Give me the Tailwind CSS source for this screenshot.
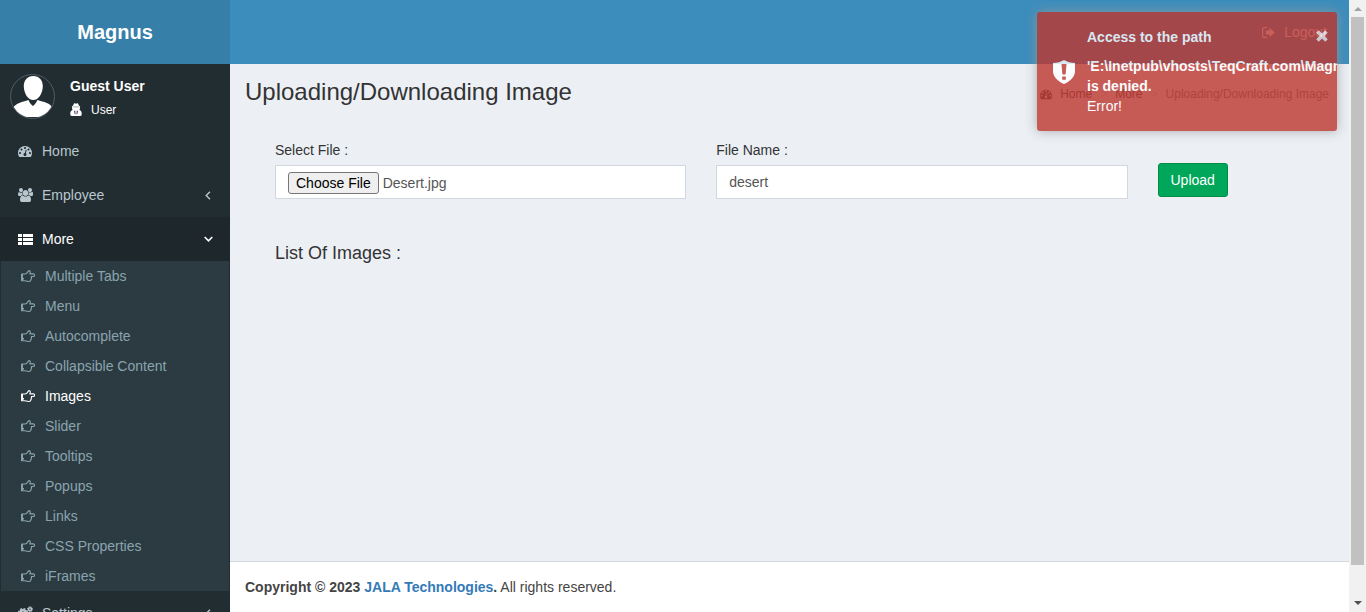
<!DOCTYPE html>
<html lang="en">
<head>
<meta charset="utf-8">
<title>Magnus - Uploading/Downloading Image</title>
<script src="https://cdn.jsdelivr.net/npm/@tailwindcss/browser@4"></script>
</head>
<body class="h-screen overflow-hidden flex font-['Liberation_Sans',Arial,sans-serif] text-sm leading-5 text-[#333]">
<svg class="hidden">
  <symbol id="dash" viewBox="0 0 1792 1792"><path d="M384 1152q0-53-37.5-90.5t-90.5-37.5-90.5 37.5-37.5 90.5 37.5 90.5 90.5 37.5 90.5-37.5 37.5-90.5zm192-448q0-53-37.5-90.5t-90.5-37.5-90.5 37.5-37.5 90.5 37.5 90.5 90.5 37.5 90.5-37.5 37.5-90.5zm428 481l101-382q6-26-7.5-48.5t-38.5-29.5-48 6.5-30 39.5l-101 382q-60 5-107 43.5t-63 98.5q-20 77 20 146t117 89 146-20 89-117q16-60-6-117t-72-91zm660-33q0-53-37.5-90.5t-90.5-37.5-90.5 37.5-37.5 90.5 37.5 90.5 90.5 37.5 90.5-37.5 37.5-90.5zm-640-640q0-53-37.5-90.5t-90.5-37.5-90.5 37.5-37.5 90.5 37.5 90.5 90.5 37.5 90.5-37.5 37.5-90.5zm448 192q0-53-37.5-90.5t-90.5-37.5-90.5 37.5-37.5 90.5 37.5 90.5 90.5 37.5 90.5-37.5 37.5-90.5zm320 448q0 261-141 483-19 29-54 29h-1402q-35 0-54-29-141-221-141-483 0-182 71-348t191-286 286-191 348-71 348 71 286 191 191 286 71 348z"/></symbol>
  <symbol id="users" viewBox="64 0 1920 1792"><path d="M657 896q-162 5-265 128h-134q-82 0-138-40.5t-56-118.5q0-353 124-353 6 0 43.5 21t97.5 42.5 119 21.5q67 0 133-23-5 37-5 66 0 159 93 290zm1071 637q0 120-73 189.5t-194 69.5h-874q-121 0-194-69.5t-73-189.5q0-53 3.5-103.5t14-109 26.5-108.5 43-97.5 62-81 85.5-53.5 111.5-20q10 0 43 21.5t73 48 107 48 135 21.5 135-21.5 107-48 73-48 43-21.5q61 0 111.5 20t85.5 53.5 62 81 43 97.5 26.5 108.5 14 109 3.5 103.5zm-1024-1277q0 106-75 181t-181 75-181-75-75-181 75-181 181-75 181 75 75 181zm704 384q0 159-112.5 271.5t-271.5 112.5-271.5-112.5-112.5-271.5 112.5-271.5 271.5-112.5 271.5 112.5 112.5 271.5zm576 225q0 78-56 118.5t-138 40.5h-134q-103-123-265-128 93-131 93-290 0-29-5-66 66 23 133 23 59 0 119-21.5t97.5-42.5 43.5-21q124 0 124 353zm-128-609q0 106-75 181t-181 75-181-75-75-181 75-181 181-75 181 75 75 181z"/></symbol>
  <symbol id="hand" viewBox="0 0 28 24"><path fill="none" stroke="currentColor" stroke-width="2.200" stroke-linejoin="round" d="M7.500 8H1.200V21.500H7c3 0 4 1.400 7.500 1.400h1.500c2.500 0 3.800-1.400 3.600-3.400 1.200-1 1.300-2.500.8-3.600 1-1 .9-2 .4-3h4.200c1.200 0 2-1.200 2-2.600s-.9-2.500-2-2.500h-7.200c0-1.200.8-1.800.8-3.600 0-2-1.200-3-3-3-1.700 1.400-1.900 3.200-3.400 4.600C11 7 9.500 8 7.500 8z"/><path d="M1 8h3v13H1z"/><path d="M3 16h3v3H3z"/></symbol>
  <symbol id="list" viewBox="0 0 15 11"><path d="M0 0h4v3H0zM5 0h10v3H5zM0 4h4v3H0zM5 4h10v3H5zM0 8h4v3H0zM5 8h10v3H5z"/></symbol>
  <symbol id="left" viewBox="0 0 6 9"><path fill="none" stroke="currentColor" stroke-width="1.4" d="M5 .7 1.200 4.500 5 8.300"/></symbol>
</svg>

<aside class="w-[230px] shrink-0 h-full overflow-hidden bg-[#222d32]">
  <a href="#" class="flex h-16 items-center justify-center bg-[#367fa9] text-xl font-bold text-white">Magnus</a>
  <div class="flex h-[65px] gap-[15px] pt-[10px] pl-[10px] text-white">
    <svg class="size-[45px]" viewBox="0 0 45 45"><defs><clipPath id="c"><circle cx="22.500" cy="22.500" r="21.500"/></clipPath></defs><circle cx="22.500" cy="22.500" r="22" fill="none" stroke="#515b68"/><g clip-path="url(#c)" fill="#fff"><path d="M23.300 2c6 0 9.700 4.300 9.500 10.500-.2 7-4.200 13.500-9.500 13.500s-9.300-6.500-9.500-13.500C13.600 6.300 17.300 2 23.300 2zM3 34c3-5 9-6 15.500-8 1 3 3 5 4.500 6 1.500-1 3-3 4.500-6 6.500 2 13 3 15 8-1 5-4 8.500-7 9H11c-4-1-7-4-8-9z"/></g></svg>
    <div class="pt-[2px]">
      <p class="font-bold leading-5">Guest User</p>
      <a href="#" class="mt-1 flex items-center gap-[9px] text-xs leading-5"><svg class="-mt-[2px] w-3 h-[13px]" viewBox="0 0 24 26" fill="#fff"><path d="M8 1c2-1 3 .5 4 .5S14-.2 16 1c1 1.500 1.400 3 2 4.500l2.500 1.500-1 2 .5 3-1.500 2c3.500 1 5 3.500 5 8 0 2.500-1 4-3 4H3.500c-2 0-3-1.500-3-4 0-4.500 1.500-7 5-8L4 12l.5-3-1-2L6 5.500C6.600 4 7 2.500 8 1z"/><path fill="#222d32" fill-opacity=".6" d="M6.500 7.200h11v1.300h-11z"/><path fill="#4b2a66" d="M8 15.500h2.500l.5 7H9.500zM16 15.500h-2.500l-.5 7h1.500z"/></svg>User</a>
    </div>
  </div>
  <nav class="text-[#b8c7ce]">
    <a href="#" class="flex h-11 items-center pl-[18px]"><svg class="size-[14px] mr-[10px] fill-current"><use href="#dash"/></svg>Home</a>
    <a href="#" class="flex h-11 items-center pl-[18px] pr-[19px]"><svg class="w-[15px] h-[14px] mr-[9px] fill-current"><use href="#users"/></svg>Employee<svg class="ml-auto w-[6px] h-[9px]"><use href="#left"/></svg></a>
    <a href="#" class="flex h-11 items-center bg-[#1e282c] pl-[18px] pr-[17px] text-white"><svg class="w-[15px] h-[11px] mr-[9px] fill-current"><use href="#list"/></svg>More<svg class="ml-auto w-[9px] h-[6px]" viewBox="0 0 9 6"><path fill="none" stroke="currentColor" stroke-width="1.600" d="M.7 1 4.500 4.800 8.300 1"/></svg></a>
    <div class="mx-px bg-[#2c3b41] text-[#8aa4af] *:flex *:h-[30px] *:items-center *:gap-[10px] *:pl-5">
      <a href="#"><svg class="w-[14px] h-3 fill-current"><use href="#hand"/></svg>Multiple Tabs</a>
      <a href="#"><svg class="w-[14px] h-3 fill-current"><use href="#hand"/></svg>Menu</a>
      <a href="#"><svg class="w-[14px] h-3 fill-current"><use href="#hand"/></svg>Autocomplete</a>
      <a href="#"><svg class="w-[14px] h-3 fill-current"><use href="#hand"/></svg>Collapsible Content</a>
      <a href="#" class="text-white"><svg class="w-[14px] h-3 fill-current"><use href="#hand"/></svg>Images</a>
      <a href="#"><svg class="w-[14px] h-3 fill-current"><use href="#hand"/></svg>Slider</a>
      <a href="#"><svg class="w-[14px] h-3 fill-current"><use href="#hand"/></svg>Tooltips</a>
      <a href="#"><svg class="w-[14px] h-3 fill-current"><use href="#hand"/></svg>Popups</a>
      <a href="#"><svg class="w-[14px] h-3 fill-current"><use href="#hand"/></svg>Links</a>
      <a href="#"><svg class="w-[14px] h-3 fill-current"><use href="#hand"/></svg>CSS Properties</a>
      <a href="#"><svg class="w-[14px] h-3 fill-current"><use href="#hand"/></svg>iFrames</a>
    </div>
    <a href="#" class="flex h-11 items-center pl-[18px] pr-[19px]"><svg class="w-[15px] h-[14px] mr-[9px]" viewBox="0 0 30 28" fill="none" stroke="currentColor"><circle cx="10" cy="14" r="5.500" stroke-width="5"/><circle cx="10" cy="14" r="8.800" stroke-width="3" stroke-dasharray="3.900 3"/><circle cx="24" cy="6.500" r="3" stroke-width="3"/><circle cx="24" cy="6.500" r="5" stroke-width="2" stroke-dasharray="2.200 1.700"/><circle cx="24" cy="21.500" r="3" stroke-width="3"/><circle cx="24" cy="21.500" r="5" stroke-width="2" stroke-dasharray="2.200 1.700"/></svg>Settings<svg class="ml-auto w-[6px] h-[9px]"><use href="#left"/></svg></a>
  </nav>
</aside>

<div class="relative flex min-w-0 flex-1 flex-col bg-[#ecf0f5]">
  <header class="flex h-16 shrink-0 items-center justify-end bg-[#3c8dbc] pr-[22px] text-white">
    <a href="#" class="flex items-center gap-[9px]"><svg class="w-[13px] h-[11px] fill-current" viewBox="0 0 26 22"><path fill="none" stroke="currentColor" stroke-width="2.400" d="M10 1.200H5Q1.200 1.200 1.200 5v12q0 3.800 3.800 3.800h5"/><path d="M15 1.500 25.500 11 15 20.500V15H8V7h7z"/></svg>Logout</a>
  </header>
  <main class="flex-1">
    <div class="flex justify-between pt-[15px] pl-[15px] pr-5">
      <h1 class="text-2xl leading-[26px]">Uploading/Downloading Image</h1>
      <nav class="flex h-[30px] items-center text-xs text-[#444]"><svg class="size-3 mr-2 fill-current"><use href="#dash"/></svg><a href="#">Home</a><span class="px-2 text-[#ccc]">&gt;</span><a href="#">More</a><span class="px-2 text-[#ccc]">&gt;</span><span class="text-[#777]">Uploading/Downloading Image</span></nav>
    </div>
    <form class="grid grid-cols-12 px-[30px] pt-[31px]">
      <div class="col-span-5 px-[15px]">
        <label for="file" class="mb-[5px] block">Select File :</label>
        <input id="file" type="file" class="block h-[34px] w-full border border-[#d2d6de] bg-white px-3 py-[6px] text-[#555] file:mr-1 file:h-[22px] file:rounded-[3px] file:border file:border-solid file:border-[#767676] file:bg-[#efefef] file:px-[7px] file:text-black">
      </div>
      <div class="col-span-5 px-[15px]">
        <label for="name" class="mb-[5px] block">File Name :</label>
        <input id="name" type="text" value="desert" class="block h-[34px] w-full border border-[#d2d6de] bg-white px-3 text-[#555]">
      </div>
      <div class="col-span-2 px-[15px] pt-[23px]">
        <button type="button" class="h-[34px] rounded-[3px] border border-[#008d4c] bg-[#00a65a] px-3 text-white">Upload</button>
      </div>
    </form>
    <h2 class="px-[45px] pt-[44px] text-lg leading-5">List Of Images :</h2>
  </main>
  <footer class="border-t border-[#d2d6de] bg-white p-[15px] text-[#444]"><strong>Copyright © 2023 <a href="#" class="text-[#337ab7]">JALA Technologies</a>.</strong> All rights reserved.</footer>

  <div role="alert" class="absolute top-3 right-3 w-[300px] overflow-hidden rounded-[3px] bg-[#bd362f] p-[15px] pl-[50px] text-white opacity-80 shadow-[0_0_12px_#999]">
    <svg class="absolute left-4 top-12 w-[22px] h-6" viewBox="0 0 22 24"><path fill="#fff" d="M11 0c3 2 7 2.800 11 3v8c0 6-5 10.500-11 13C5 21.500 0 17 0 11V3c4-.2 8-1 11-3z"/><path fill="#bd362f" d="M8.500 4h5l-.9 10.500H9.400zM9.200 16.500h3.600v3.300H9.200z"/></svg>
    <button type="button" aria-label="Close" class="absolute right-[9px] top-[18px] opacity-80"><svg class="size-3" viewBox="0 0 12 12"><path stroke="#fff" stroke-width="3.600" d="M1.500 1.500l9 9M10.500 1.500l-9 9"/></svg></button>
    <div class="font-bold"><p class="mb-[9px]">Access to the path</p><p class="whitespace-nowrap">'E:\Inetpub\vhosts\TeqCraft.com\Magnus</p><p>is denied.</p></div>
    <p>Error!</p>
  </div>
</div>

<div aria-hidden="true" class="flex w-[17px] shrink-0 flex-col items-center bg-[#f1f1f1]">
  <svg class="h-[17px] w-[17px] shrink-0" viewBox="0 0 17 17"><path fill="#a3a3a3" d="M5 11h8L9 7z"/></svg>
  <div class="w-[13px] flex-1 bg-[#c1c1c1]"></div>
  <svg class="mt-[30px] h-[17px] w-[17px] shrink-0" viewBox="0 0 17 17"><path fill="#505050" d="M5 6h8l-4 4z"/></svg>
</div>
<script>
  const files = new DataTransfer();
  files.items.add(new File([''], 'Desert.jpg', { type: 'image/jpeg' }));
  document.getElementById('file').files = files.files;
</script>
</body>
</html>
